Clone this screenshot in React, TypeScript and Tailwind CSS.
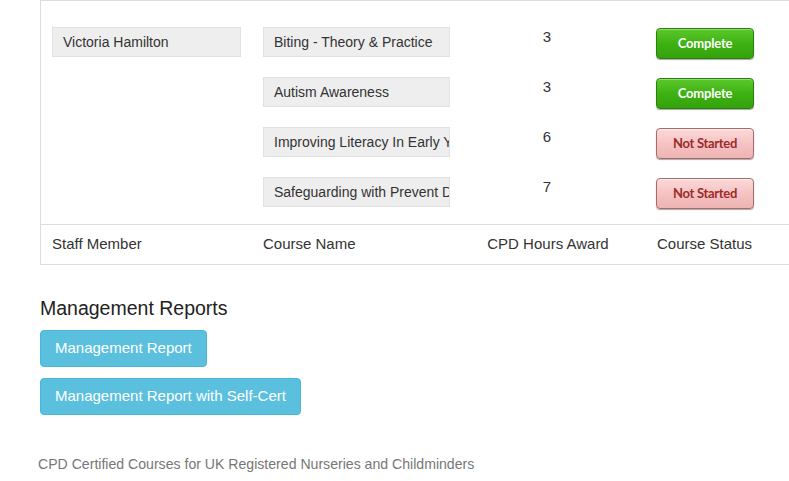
const courses = [
  { name: "Biting - Theory & Practice", hours: 3, done: true },
  { name: "Autism Awareness", hours: 3, done: true },
  { name: "Improving Literacy In Early Years", hours: 6, done: false },
  { name: "Safeguarding with Prevent Duty", hours: 7, done: false },
]

function StatusBadge({ done }: { done: boolean }) {
  if (done) {
    return (
      <div className="mt-[1px] w-[98px] h-[31px] rounded-[4px] border border-[#2d7f0c] bg-gradient-to-b from-[#5cc82a] via-[#3db212] to-[#34a20c] shadow-[0_1px_1px_rgba(0,0,0,0.35),inset_0_1px_0_rgba(255,255,255,0.35)] flex items-center justify-center">
        <span className="font-['Lato',sans-serif] font-bold text-[13px] text-white tracking-[-0.2px]">Complete</span>
      </div>
    )
  }
  return (
    <div className="mt-[1px] w-[98px] h-[31px] rounded-[4px] border border-[#a56a6a] bg-gradient-to-b from-[#fbd9d9] via-[#f6c3c3] to-[#efb3b3] shadow-[0_1px_1px_rgba(0,0,0,0.35),inset_0_1px_0_rgba(255,255,255,0.5)] flex items-center justify-center">
      <span className="font-['Lato',sans-serif] font-bold text-[13px] text-[#9b2c2c] tracking-[-0.3px]">Not Started</span>
    </div>
  )
}

function Field({ children }: { children: React.ReactNode }) {
  return (
    <div className="h-[30px] bg-[#eeeeee] border border-[#e2e2e2] pl-[10px] pr-[1px] flex items-center overflow-hidden whitespace-nowrap text-[14px] text-[#333]">
      {children}
    </div>
  )
}

export default function App() {
  return (
    <div className="w-[789px] h-[481px] overflow-hidden bg-white text-[#333] font-['Liberation_Sans',Arial,sans-serif]">
      <div className="ml-[40px] w-[800px] border-l border-t border-b border-[#dddddd]">
        <div className="pt-[26px] pb-[17px] pl-[11px] flex flex-col gap-[20px]">
          {courses.map((c, i) => (
            <div key={c.name} className="h-[30px] grid grid-cols-[211px_187px_19px_156px_31px_98px] items-start">
              <div className="w-[189px]">{i === 0 && <Field>Victoria Hamilton</Field>}</div>
              <Field>{c.name}</Field>
              <div />
              <div className="text-center text-[15px] leading-[20px]">{c.hours}</div>
              <div />
              <StatusBadge done={c.done} />
            </div>
          ))}
        </div>
        <div className="border-t border-[#dddddd] h-[40px] pl-[11px] grid grid-cols-[211px_207px_156px_30px_150px] items-center text-[15px]">
          <div>Staff Member</div>
          <div>Course Name</div>
          <div className="text-center">CPD Hours Award</div>
          <div />
          <div className="pl-[1px]">Course Status</div>
        </div>
      </div>

      <div className="ml-[40px] mt-[32px]">
        <h2 className="text-[19.5px] leading-[22px] text-[#222]">Management Reports</h2>
        <div className="mt-[11px] flex flex-col items-start gap-[11px]">
          <button className="h-[37px] px-[14px] rounded-[4px] bg-[#5bc0de] border border-[#46b8da] text-white text-[15px]">
            Management Report
          </button>
          <button className="h-[37px] px-[14px] rounded-[4px] bg-[#5bc0de] border border-[#46b8da] text-white text-[15px]">
            Management Report with Self-Cert
          </button>
        </div>
      </div>

      <p className="ml-[38px] mt-[39px] text-[14.1px] leading-[20px] text-[#777]">
        CPD Certified Courses for UK Registered Nurseries and Childminders
      </p>
    </div>
  )
}
